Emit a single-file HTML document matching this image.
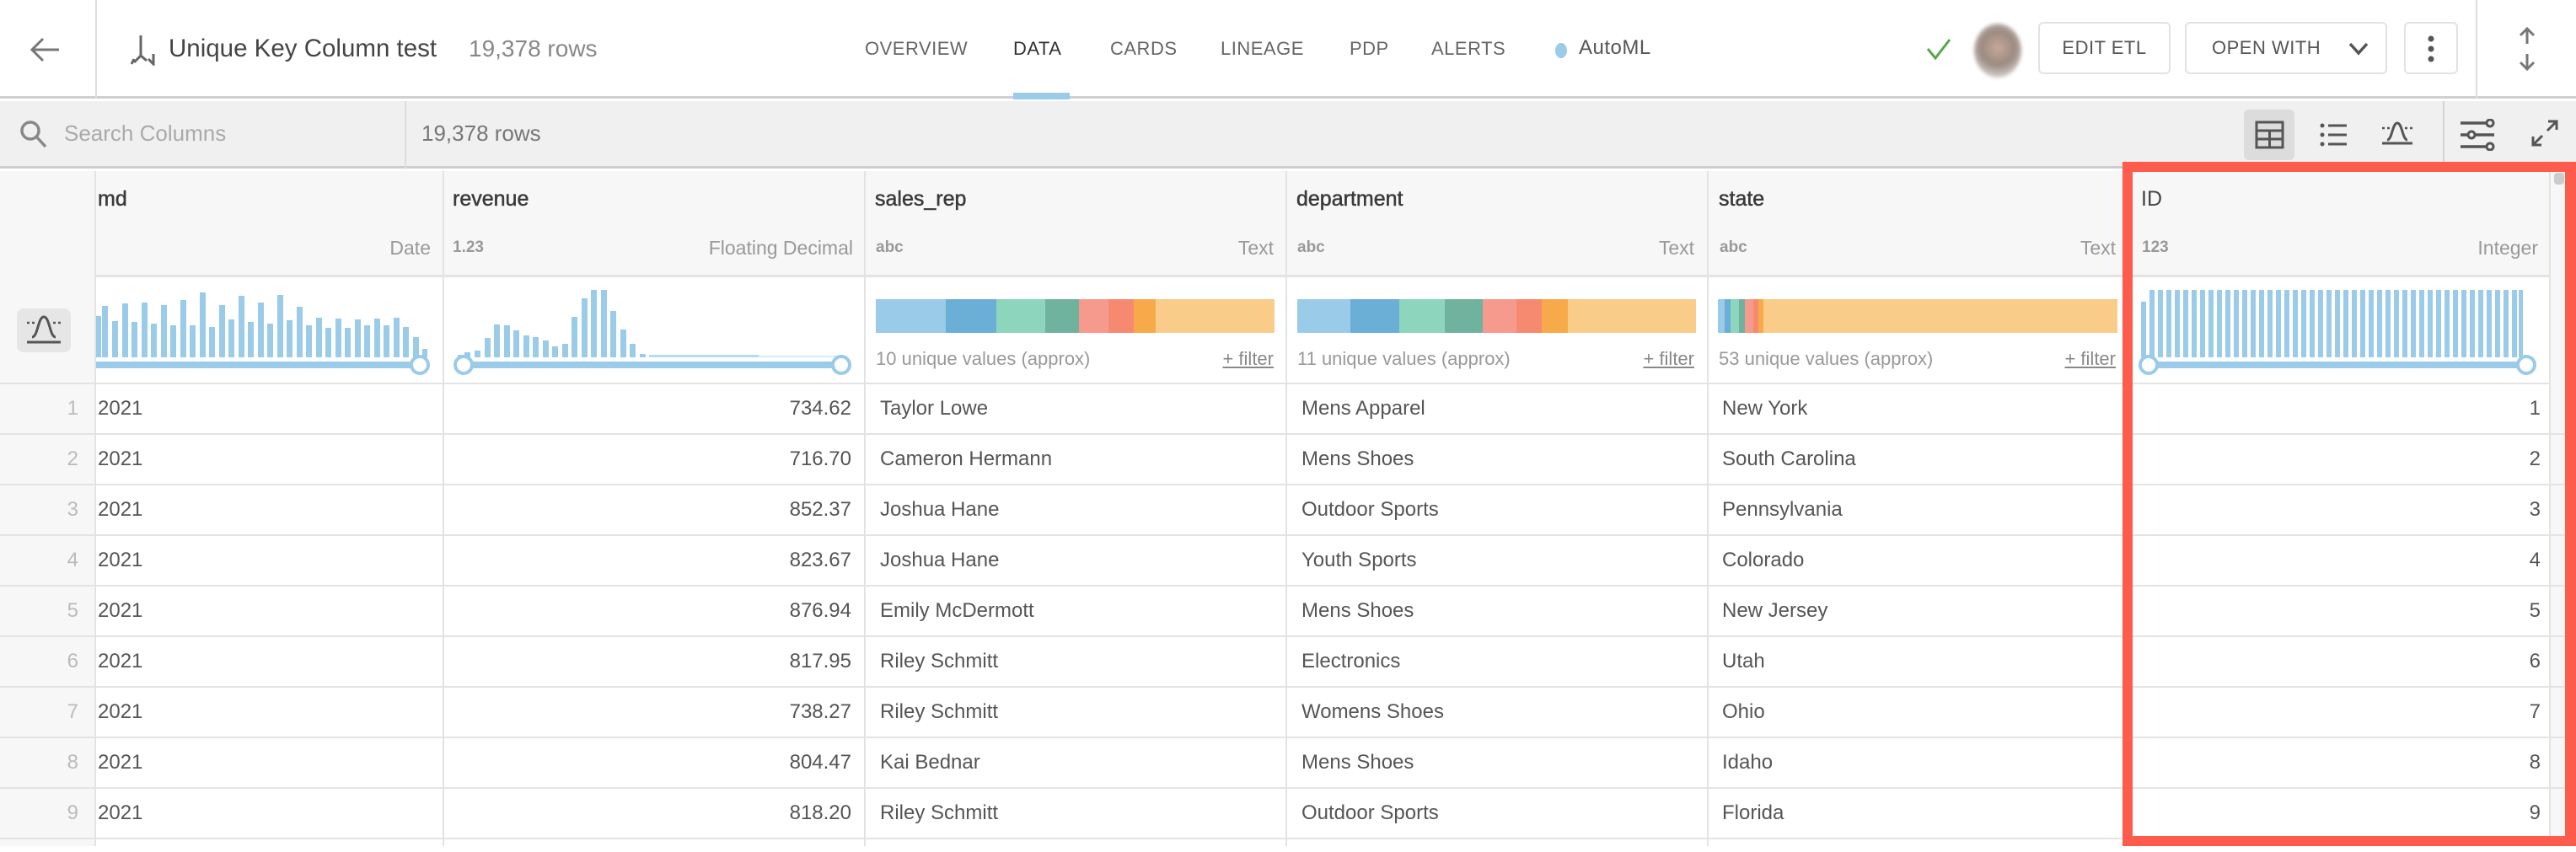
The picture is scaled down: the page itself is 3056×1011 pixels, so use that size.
<!DOCTYPE html>
<html><head><meta charset="utf-8">
<style>
*{margin:0;padding:0;box-sizing:border-box}
body{width:3056px;height:1004px;overflow:hidden;background:#fff;font-family:"Liberation Sans",sans-serif;color:#555;position:relative}
.a{position:absolute}
.t{position:absolute;white-space:nowrap}
.nav{font-size:22px;color:#666;top:45px;letter-spacing:0.5px}
.btn{position:absolute;top:26px;height:62px;border:2px solid #e2e2e2;border-radius:6px;background:#fff;font-size:22px;color:#555;letter-spacing:0.5px;line-height:58px;text-align:center}
.vl{position:absolute;width:2px;background:#e3e3e3}
.hl{position:absolute;height:2px;background:#e3e3e3}
.cn{font-size:25px;color:#3a3a3a;top:222px;-webkit-text-stroke:0.5px #3a3a3a}
.ty{font-size:23px;color:#999;top:281px}
.ab{font-size:19px;color:#999;font-weight:bold;top:283px}
.sm{font-size:22px;color:#999;top:413px}
.fl{font-size:22px;color:#888;top:413px;text-decoration:underline}
.cell{font-size:24px;color:#555}
</style></head><body>
<div class="a" style="left:0;top:0;width:3056px;height:117px;background:#fff;border-bottom:3px solid #d0d0d0"></div>
<svg class="a" style="left:34px;top:42px" width="40" height="34" viewBox="0 0 40 34"><path d="M36 17H5M17 4L4 17l13 13" fill="none" stroke="#777" stroke-width="3"/></svg>
<div class="vl" style="left:113px;top:0;height:117px;background:#ddd"></div>
<svg class="a" style="left:152px;top:40px" width="36" height="38" viewBox="0 0 36 38"><path d="M15 2v24l-8 8M15 26l7 6M4 36l3-6M30 24v12l-6-6" fill="none" stroke="#666" stroke-width="3"/></svg>
<div class="t" style="left:200px;top:41px;font-size:29.5px;color:#444">Unique Key Column test</div>
<div class="t" style="left:556px;top:42px;font-size:28px;color:#888">19,378 rows</div>
<div class="t nav" style="left:1026px">OVERVIEW</div>
<div class="t nav" style="left:1202px;color:#333">DATA</div>
<div class="a" style="left:1202px;top:110px;width:67px;height:8px;background:#9acbe8"></div>
<div class="t nav" style="left:1317px">CARDS</div>
<div class="t nav" style="left:1448px">LINEAGE</div>
<div class="t nav" style="left:1601px">PDP</div>
<div class="t nav" style="left:1698px">ALERTS</div>
<div class="a" style="left:1845px;top:51px;width:14px;height:18px;border-radius:50%;background:#9acbe8"></div>
<div class="t nav" style="left:1873px;font-size:24px;top:43px;color:#555">AutoML</div>
<svg class="a" style="left:2284px;top:44px" width="32" height="28" viewBox="0 0 32 28"><path d="M3 14l9 11L29 3" fill="none" stroke="#5aa64a" stroke-width="3"/></svg>
<div class="a" style="left:2342px;top:28px;width:56px;height:64px;border-radius:50%;background:radial-gradient(circle at 50% 45%,#c9a89a 0,#9a8a80 45%,#d8d4d0 80%,#fff 100%);filter:blur(2px)"></div>
<div class="btn" style="left:2418px;width:157px">EDIT ETL</div>
<div class="btn" style="left:2592px;width:240px;text-align:left;padding-left:30px">OPEN WITH
<svg class="a" style="left:192px;top:22px" width="24" height="16" viewBox="0 0 24 16"><path d="M2 2l10 11L22 2" fill="none" stroke="#555" stroke-width="3.5"/></svg></div>
<div class="btn" style="left:2852px;width:64px"><svg class="a" style="left:24px;top:14px" width="12" height="32"><circle cx="6" cy="4" r="3.5" fill="#555"/><circle cx="6" cy="16" r="3.5" fill="#555"/><circle cx="6" cy="28" r="3.5" fill="#555"/></svg></div>
<div class="vl" style="left:2937px;top:0;height:117px;background:#ddd"></div>
<svg class="a" style="left:2984px;top:30px" width="28" height="56" viewBox="0 0 28 56"><path d="M14 4v18M6 12l8-8 8 8M14 34v18M6 44l8 8 8-8" fill="none" stroke="#777" stroke-width="3"/></svg>
<div class="a" style="left:0;top:120px;width:3056px;height:80px;background:#f0f0f0;border-bottom:3px solid #ccc"></div>
<svg class="a" style="left:22px;top:141px" width="38" height="38" viewBox="0 0 38 38"><circle cx="14" cy="14" r="10" fill="none" stroke="#888" stroke-width="3.5"/><path d="M21 21l11 12" stroke="#888" stroke-width="3.5"/></svg>
<div class="t" style="left:76px;top:143px;font-size:26px;color:#aaa">Search Columns</div>
<div class="vl" style="left:480px;top:120px;height:80px;background:#ddd"></div>
<div class="t" style="left:500px;top:143px;font-size:26px;color:#777">19,378 rows</div>
<div class="a" style="left:2662px;top:130px;width:60px;height:60px;background:#dcdcdc;border-radius:6px"></div>
<svg class="a" style="left:2675px;top:143px" width="35" height="34" viewBox="0 0 35 34"><rect x="2" y="2" width="31" height="30" fill="none" stroke="#555" stroke-width="3"/><path d="M2 12h31M2 22h31M17.5 12v20" stroke="#555" stroke-width="3"/></svg>
<svg class="a" style="left:2752px;top:145px" width="34" height="30" viewBox="0 0 34 30"><circle cx="3" cy="4" r="2.5" fill="#555"/><circle cx="3" cy="15" r="2.5" fill="#555"/><circle cx="3" cy="26" r="2.5" fill="#555"/><path d="M10 4h22M10 15h22M10 26h22" stroke="#555" stroke-width="3"/></svg>
<svg class="a" style="left:2824px;top:143px" width="40" height="34" viewBox="0 0 40 34"><path d="M2 27h36" stroke="#555" stroke-width="3"/><path d="M8 23c6 0 6-20 12-20s6 20 12 20" fill="none" stroke="#555" stroke-width="3"/><path d="M2 9h3M8 9h3M29 9h3M35 9h3" stroke="#555" stroke-width="2.5"/></svg>
<div class="vl" style="left:2898px;top:120px;height:80px;background:#d4d4d4"></div>
<svg class="a" style="left:2918px;top:141px" width="44" height="38" viewBox="0 0 44 38"><path d="M1 5h32M1 19h40M1 33h32" stroke="#555" stroke-width="3.5"/><circle cx="36" cy="5" r="4" fill="#f0f0f0" stroke="#555" stroke-width="3"/><circle cx="14" cy="19" r="4" fill="#f0f0f0" stroke="#555" stroke-width="3"/><circle cx="36" cy="33" r="4" fill="#f0f0f0" stroke="#555" stroke-width="3"/></svg>
<svg class="a" style="left:3002px;top:141px" width="34" height="34" viewBox="0 0 34 34"><path d="M20 14L31 3M21 3h10v10M14 20L3 31M3 21v10h10" fill="none" stroke="#555" stroke-width="3"/></svg>
<div class="a" style="left:0;top:203px;width:3056px;height:124px;background:#f7f7f7"></div>
<div class="a" style="left:0;top:203px;width:113px;height:801px;background:#f7f7f7"></div>
<div class="hl" style="left:113px;top:326px;width:2943px;height:3px"></div>
<div class="hl" style="left:0;top:454px;width:3056px"></div>
<div class="a" style="left:20px;top:366px;width:64px;height:52px;background:#e6e6e6;border-radius:8px"></div>
<svg class="a" style="left:30px;top:373px" width="44" height="38" viewBox="0 0 44 38"><path d="M2 33h40" stroke="#555" stroke-width="3"/><path d="M8 27c7 0 7-24 14-24s7 24 14 24" fill="none" stroke="#555" stroke-width="3"/><path d="M2 10h3M8 10h3M33 10h3M39 10h3" stroke="#555" stroke-width="2.5"/></svg>
<div class="vl" style="left:112px;top:203px;height:801px"></div>
<div class="vl" style="left:525px;top:203px;height:801px"></div>
<div class="vl" style="left:1025px;top:203px;height:801px"></div>
<div class="vl" style="left:1525px;top:203px;height:801px"></div>
<div class="vl" style="left:2025px;top:203px;height:801px"></div>
<div class="vl" style="left:3024px;top:203px;height:801px"></div>
<div class="a" style="left:3026px;top:203px;width:30px;height:801px;background:#f7f7f7"></div>
<div class="a" style="left:3030px;top:205px;width:12px;height:14px;background:#ccc;border-radius:4px"></div>
<div class="t cn" style="left:116px">md</div>
<div class="t ty" style="right:2545px">Date</div>
<div class="t cn" style="left:537px">revenue</div>
<div class="t ab" style="left:537px">1.23</div>
<div class="t ty" style="right:2044px">Floating Decimal</div>
<div class="t cn" style="left:1038px">sales_rep</div>
<div class="t ab" style="left:1039px">abc</div>
<div class="t ty" style="right:1545px">Text</div>
<div class="t cn" style="left:1538px">department</div>
<div class="t ab" style="left:1539px">abc</div>
<div class="t ty" style="right:1046px">Text</div>
<div class="t cn" style="left:2039px">state</div>
<div class="t ab" style="left:2040px">abc</div>
<div class="t ty" style="right:546px">Text</div>
<div class="t cn" style="left:2540px;-webkit-text-stroke:0;color:#444">ID</div>
<div class="t ab" style="left:2541px">123</div>
<div class="t ty" style="right:45px">Integer</div>
<svg class="a" style="left:0;top:329px" width="3056" height="126" viewBox="0 329 3056 126">
<g fill="#9acbe8">
<rect x="114" y="375" width="6" height="49"/><rect x="121" y="363" width="7" height="61"/><rect x="133" y="381" width="7" height="43"/><rect x="145" y="360" width="7" height="64"/><rect x="156" y="382" width="7" height="42"/><rect x="168" y="359" width="7" height="65"/><rect x="179" y="384" width="7" height="40"/><rect x="191" y="362" width="7" height="62"/><rect x="202" y="386" width="7" height="38"/><rect x="214" y="356" width="7" height="68"/><rect x="225" y="386" width="7" height="38"/><rect x="237" y="347" width="7" height="77"/><rect x="248" y="388" width="7" height="36"/><rect x="260" y="362" width="7" height="62"/><rect x="271" y="379" width="7" height="45"/><rect x="283" y="351" width="7" height="73"/><rect x="294" y="382" width="7" height="42"/><rect x="306" y="359" width="7" height="65"/><rect x="317" y="384" width="7" height="40"/><rect x="329" y="350" width="7" height="74"/><rect x="340" y="380" width="7" height="44"/><rect x="352" y="364" width="7" height="60"/><rect x="363" y="386" width="7" height="38"/><rect x="375" y="377" width="7" height="47"/><rect x="386" y="389" width="7" height="35"/><rect x="398" y="378" width="7" height="46"/><rect x="409" y="389" width="7" height="35"/><rect x="421" y="379" width="7" height="45"/><rect x="432" y="386" width="7" height="38"/><rect x="444" y="378" width="7" height="46"/><rect x="455" y="386" width="7" height="38"/><rect x="467" y="377" width="7" height="47"/><rect x="478" y="388" width="7" height="36"/><rect x="490" y="400" width="7" height="24"/><rect x="501" y="414" width="6" height="10"/>
</g>
<g fill="#9acbe8">
<rect x="543" y="421" width="7" height="3"/><rect x="551" y="418" width="7" height="6"/><rect x="563" y="416" width="7" height="8"/><rect x="575" y="401" width="7" height="23"/><rect x="586" y="385" width="7" height="39"/><rect x="598" y="386" width="7" height="38"/><rect x="609" y="392" width="7" height="32"/><rect x="621" y="398" width="7" height="26"/><rect x="632" y="400" width="7" height="24"/><rect x="644" y="404" width="7" height="20"/><rect x="655" y="411" width="7" height="13"/><rect x="667" y="408" width="7" height="16"/><rect x="678" y="376" width="7" height="48"/><rect x="690" y="354" width="7" height="70"/><rect x="701" y="344" width="7" height="80"/><rect x="713" y="344" width="7" height="80"/><rect x="724" y="369" width="7" height="55"/><rect x="736" y="391" width="7" height="33"/><rect x="747" y="408" width="7" height="16"/><rect x="759" y="420" width="7" height="4"/>
<rect x="770" y="421" width="130" height="3" opacity="0.7"/><rect x="900" y="422" width="100" height="2" opacity="0.4"/>
</g>
<g stroke="#9acbe8" fill="#fff">
<rect x="114" y="429" width="386" height="8" fill="#9acbe8" stroke="none"/>
<circle cx="498" cy="433" r="10" stroke-width="4"/>
<rect x="550" y="429" width="448" height="8" fill="#9acbe8" stroke="none"/>
<circle cx="550" cy="433" r="10" stroke-width="4"/><circle cx="998" cy="433" r="10" stroke-width="4"/>
<rect x="2548" y="429" width="448" height="8" fill="#9acbe8" stroke="none"/>
<circle cx="2549" cy="433" r="10" stroke-width="4"/><circle cx="2997" cy="433" r="10" stroke-width="4"/>
</g>
<g>
<rect x="1039" y="355" width="83" height="40" fill="#9acbe8"/><rect x="1122" y="355" width="60" height="40" fill="#6bafd6"/><rect x="1182" y="355" width="58" height="40" fill="#8dd5bd"/><rect x="1240" y="355" width="40" height="40" fill="#6fb39e"/><rect x="1280" y="355" width="35" height="40" fill="#f79a8e"/><rect x="1315" y="355" width="30" height="40" fill="#f58a70"/><rect x="1345" y="355" width="26" height="40" fill="#f8aa4a"/><rect x="1371" y="355" width="141" height="40" fill="#f9cd89"/>
<rect x="1539" y="355" width="63" height="40" fill="#9acbe8"/><rect x="1602" y="355" width="58" height="40" fill="#6bafd6"/><rect x="1660" y="355" width="54" height="40" fill="#8dd5bd"/><rect x="1714" y="355" width="45" height="40" fill="#6fb39e"/><rect x="1759" y="355" width="40" height="40" fill="#f79a8e"/><rect x="1799" y="355" width="30" height="40" fill="#f58a70"/><rect x="1829" y="355" width="31" height="40" fill="#f8aa4a"/><rect x="1860" y="355" width="152" height="40" fill="#f9cd89"/>
<rect x="2038" y="355" width="8" height="40" fill="#9acbe8"/><rect x="2046" y="355" width="7" height="40" fill="#6bafd6"/><rect x="2053" y="355" width="10" height="40" fill="#8dd5bd"/><rect x="2063" y="355" width="7" height="40" fill="#6fb39e"/><rect x="2070" y="355" width="10" height="40" fill="#f79a8e"/><rect x="2080" y="355" width="6" height="40" fill="#f58a70"/><rect x="2086" y="355" width="6" height="40" fill="#f8aa4a"/><rect x="2092" y="355" width="420" height="40" fill="#f9cd89"/>
</g>
<g fill="#9acbe8">
<rect x="2540" y="358" width="6" height="66"/>
<rect x="2550" y="344" width="6" height="80"/><rect x="2560" y="344" width="6" height="80"/><rect x="2570" y="344" width="6" height="80"/><rect x="2580" y="344" width="6" height="80"/><rect x="2590" y="344" width="6" height="80"/><rect x="2600" y="344" width="6" height="80"/><rect x="2610" y="344" width="6" height="80"/><rect x="2620" y="344" width="6" height="80"/><rect x="2630" y="344" width="6" height="80"/><rect x="2640" y="344" width="6" height="80"/><rect x="2650" y="344" width="6" height="80"/><rect x="2660" y="344" width="6" height="80"/><rect x="2670" y="344" width="6" height="80"/><rect x="2680" y="344" width="6" height="80"/><rect x="2690" y="344" width="6" height="80"/><rect x="2700" y="344" width="6" height="80"/><rect x="2710" y="344" width="6" height="80"/><rect x="2720" y="344" width="6" height="80"/><rect x="2730" y="344" width="6" height="80"/><rect x="2740" y="344" width="6" height="80"/><rect x="2750" y="344" width="6" height="80"/><rect x="2760" y="344" width="6" height="80"/><rect x="2770" y="344" width="6" height="80"/><rect x="2780" y="344" width="6" height="80"/><rect x="2790" y="344" width="6" height="80"/><rect x="2800" y="344" width="6" height="80"/><rect x="2810" y="344" width="6" height="80"/><rect x="2820" y="344" width="6" height="80"/><rect x="2830" y="344" width="6" height="80"/><rect x="2840" y="344" width="6" height="80"/><rect x="2850" y="344" width="6" height="80"/><rect x="2860" y="344" width="6" height="80"/><rect x="2870" y="344" width="6" height="80"/><rect x="2880" y="344" width="6" height="80"/><rect x="2890" y="344" width="6" height="80"/><rect x="2900" y="344" width="6" height="80"/><rect x="2910" y="344" width="6" height="80"/><rect x="2920" y="344" width="6" height="80"/><rect x="2930" y="344" width="6" height="80"/><rect x="2940" y="344" width="6" height="80"/><rect x="2950" y="344" width="6" height="80"/><rect x="2960" y="344" width="6" height="80"/><rect x="2970" y="344" width="6" height="80"/><rect x="2980" y="344" width="6" height="80"/><rect x="2988" y="344" width="5" height="80"/>
</g>
</svg>
<div class="t sm" style="left:1039px">10 unique values (approx)</div>
<div class="t fl" style="right:1545px">+ filter</div>
<div class="t sm" style="left:1539px">11 unique values (approx)</div>
<div class="t fl" style="right:1046px">+ filter</div>
<div class="t sm" style="left:2039px">53 unique values (approx)</div>
<div class="t fl" style="right:546px">+ filter</div>
<div class="hl" style="left:0;top:514px;width:3056px"></div>
<div class="hl" style="left:0;top:574px;width:3056px"></div>
<div class="hl" style="left:0;top:634px;width:3056px"></div>
<div class="hl" style="left:0;top:694px;width:3056px"></div>
<div class="hl" style="left:0;top:754px;width:3056px"></div>
<div class="hl" style="left:0;top:814px;width:3056px"></div>
<div class="hl" style="left:0;top:874px;width:3056px"></div>
<div class="hl" style="left:0;top:934px;width:3056px"></div>
<div class="hl" style="left:0;top:994px;width:3056px"></div>
<div class="a cell" style="left:0;top:471px;width:3056px">
<div style="position:relative;height:60px"><span class="t" style="right:2963px;color:#bbb">1</span><span class="t" style="left:116px">2021</span><span class="t" style="right:2046px">734.62</span><span class="t" style="left:1044px">Taylor Lowe</span><span class="t" style="left:1544px">Mens Apparel</span><span class="t" style="left:2043px">New York</span><span class="t" style="right:42px">1</span></div>
<div style="position:relative;height:60px"><span class="t" style="right:2963px;color:#bbb">2</span><span class="t" style="left:116px">2021</span><span class="t" style="right:2046px">716.70</span><span class="t" style="left:1044px">Cameron Hermann</span><span class="t" style="left:1544px">Mens Shoes</span><span class="t" style="left:2043px">South Carolina</span><span class="t" style="right:42px">2</span></div>
<div style="position:relative;height:60px"><span class="t" style="right:2963px;color:#bbb">3</span><span class="t" style="left:116px">2021</span><span class="t" style="right:2046px">852.37</span><span class="t" style="left:1044px">Joshua Hane</span><span class="t" style="left:1544px">Outdoor Sports</span><span class="t" style="left:2043px">Pennsylvania</span><span class="t" style="right:42px">3</span></div>
<div style="position:relative;height:60px"><span class="t" style="right:2963px;color:#bbb">4</span><span class="t" style="left:116px">2021</span><span class="t" style="right:2046px">823.67</span><span class="t" style="left:1044px">Joshua Hane</span><span class="t" style="left:1544px">Youth Sports</span><span class="t" style="left:2043px">Colorado</span><span class="t" style="right:42px">4</span></div>
<div style="position:relative;height:60px"><span class="t" style="right:2963px;color:#bbb">5</span><span class="t" style="left:116px">2021</span><span class="t" style="right:2046px">876.94</span><span class="t" style="left:1044px">Emily McDermott</span><span class="t" style="left:1544px">Mens Shoes</span><span class="t" style="left:2043px">New Jersey</span><span class="t" style="right:42px">5</span></div>
<div style="position:relative;height:60px"><span class="t" style="right:2963px;color:#bbb">6</span><span class="t" style="left:116px">2021</span><span class="t" style="right:2046px">817.95</span><span class="t" style="left:1044px">Riley Schmitt</span><span class="t" style="left:1544px">Electronics</span><span class="t" style="left:2043px">Utah</span><span class="t" style="right:42px">6</span></div>
<div style="position:relative;height:60px"><span class="t" style="right:2963px;color:#bbb">7</span><span class="t" style="left:116px">2021</span><span class="t" style="right:2046px">738.27</span><span class="t" style="left:1044px">Riley Schmitt</span><span class="t" style="left:1544px">Womens Shoes</span><span class="t" style="left:2043px">Ohio</span><span class="t" style="right:42px">7</span></div>
<div style="position:relative;height:60px"><span class="t" style="right:2963px;color:#bbb">8</span><span class="t" style="left:116px">2021</span><span class="t" style="right:2046px">804.47</span><span class="t" style="left:1044px">Kai Bednar</span><span class="t" style="left:1544px">Mens Shoes</span><span class="t" style="left:2043px">Idaho</span><span class="t" style="right:42px">8</span></div>
<div style="position:relative;height:60px"><span class="t" style="right:2963px;color:#bbb">9</span><span class="t" style="left:116px">2021</span><span class="t" style="right:2046px">818.20</span><span class="t" style="left:1044px">Riley Schmitt</span><span class="t" style="left:1544px">Outdoor Sports</span><span class="t" style="left:2043px">Florida</span><span class="t" style="right:42px">9</span></div>
</div>
<div class="a" style="left:2518px;top:192px;width:538px;height:812px;border:12px solid #fd5b4b;border-right-width:13px"></div>
</body></html>
